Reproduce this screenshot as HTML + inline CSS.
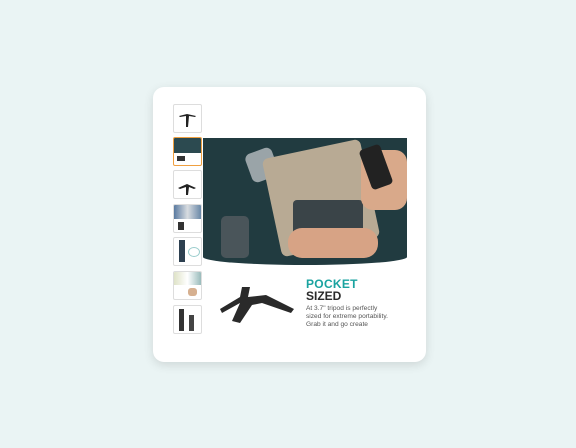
<!DOCTYPE html>
<html><head><style>
body{margin:0;width:576px;height:448px;background:#eaf4f4;position:relative;overflow:hidden;font-family:"Liberation Sans",sans-serif}
.card{position:absolute;left:153px;top:87px;width:273px;height:275px;background:#fff;border-radius:11px;box-shadow:0 3px 10px rgba(0,0,0,.12)}
.th{position:absolute;left:173px;width:27px;height:27px;border:1px solid #ddd;border-radius:2px;background:#fff;overflow:hidden}
.th.sel{border:1px solid #f0a040}
.photo{position:absolute;left:203px;top:138px;width:204px;height:127px;background:#213b40;border-radius:0 0 50% 50%/0 0 8px 8px;overflow:hidden}
</style></head><body>
<div class="card"></div>
<div class="th" style="top:104px"><svg width="27" height="27"><path d="M5 11 L13 9 L22 11 L21 12 L15 11 L14 22 L12 22 L12 11 L6 12Z" fill="#222"/></svg></div>
<div class="th sel" style="top:137px"><div style="height:15px;background:#2c4a50"></div><div style="position:absolute;left:3px;top:18px;width:8px;height:5px;background:#333"></div></div>
<div class="th" style="top:170px"><svg width="27" height="27"><path d="M4 17 L13 13 L22 17 L20 18 L15 16 L14 24 L12 24 L12 16 L6 18Z" fill="#222"/></svg></div>
<div class="th" style="top:204px"><div style="height:14px;background:linear-gradient(90deg,#5a7aa0,#d8dce0,#6a88a8)"></div><div style="position:absolute;left:4px;top:17px;width:6px;height:8px;background:#333"></div></div>
<div class="th" style="top:237px"><div style="position:absolute;left:5px;top:2px;width:6px;height:22px;background:#2d4050"></div><div style="position:absolute;left:14px;top:9px;width:10px;height:8px;border:1px solid #9cc;border-radius:50%"></div></div>
<div class="th" style="top:271px"><div style="height:13px;background:linear-gradient(90deg,#dfe3c8,#fff,#9bb)"></div><div style="position:absolute;left:14px;top:16px;width:9px;height:8px;background:#d6b090;border-radius:3px"></div></div>
<div class="th" style="top:305px"><div style="position:absolute;left:5px;top:3px;width:5px;height:22px;background:#333"></div><div style="position:absolute;left:15px;top:9px;width:5px;height:16px;background:#444"></div></div>
<div class="photo">
<div style="position:absolute;left:45px;top:12px;width:28px;height:30px;background:#9aa4a8;border-radius:6px;transform:rotate(-20deg)"></div>
<div style="position:absolute;left:68px;top:10px;width:100px;height:100px;background:#b8aa94;transform:rotate(-12deg);border-radius:6px"></div>
<div style="position:absolute;left:90px;top:62px;width:70px;height:50px;background:#3a4448;border-radius:4px"></div>
<div style="position:absolute;left:158px;top:12px;width:46px;height:60px;background:#d9a98a;border-radius:12px"></div>
<div style="position:absolute;left:162px;top:8px;width:22px;height:42px;background:#222;border-radius:4px;transform:rotate(-20deg)"></div>
<div style="position:absolute;left:85px;top:90px;width:90px;height:30px;background:#d7a385;border-radius:14px"></div>
<div style="position:absolute;left:18px;top:78px;width:28px;height:42px;background:#4a555a;border-radius:5px"></div>
</div>
<svg style="position:absolute;left:218px;top:285px" width="80" height="40"><path d="M24 2 L32 2 L30 12 L48 10 L76 24 L73 28 L44 18 L34 20 L22 38 L14 36 L22 18 L4 28 L2 24 L22 12Z" fill="#2a2a2a"/></svg>
<div style="position:absolute;left:306px;top:277px;font-weight:bold;font-size:12px;color:#1aa3a0;letter-spacing:.3px">POCKET</div>
<div style="position:absolute;left:306px;top:289px;font-weight:bold;font-size:12px;color:#2a2a2a">SIZED</div>
<div style="position:absolute;left:306px;top:305px;font-size:6.6px;line-height:8px;color:#555">At 3.7" tripod is perfectly<br>sized for extreme portability.<br>Grab it and go create</div>
</body></html>
